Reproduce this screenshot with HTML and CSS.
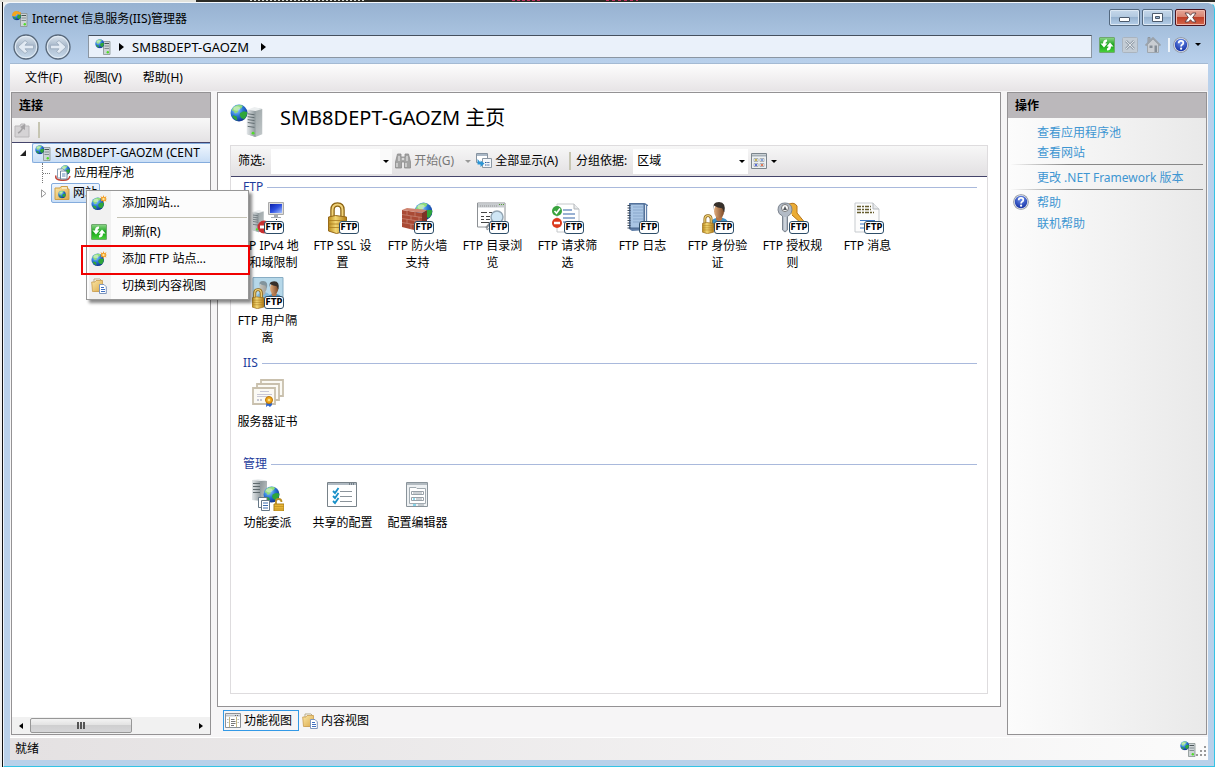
FILE: index.html
```html
<!DOCTYPE html>
<html lang="zh-CN">
<head>
<meta charset="utf-8">
<title>Internet 信息服务(IIS)管理器</title>
<link rel="stylesheet" href="styles.css">
</head>
<body>
<svg class="defs" aria-hidden="true">
  <defs>
    <radialGradient id="g-globe" cx=".35" cy=".3" r=".75"><stop offset="0" stop-color="#9fd8ff"/><stop offset=".5" stop-color="#2a78d8"/><stop offset="1" stop-color="#0d2f8c"/></radialGradient>
    <linearGradient id="g-metal" x1="0" x2="1" y1="0" y2="0"><stop offset="0" stop-color="#e4e8ea"/><stop offset="1" stop-color="#8d979b"/></linearGradient>
    <linearGradient id="g-side" x1="0" x2="1" y1="0" y2="1"><stop offset="0" stop-color="#8d9799"/><stop offset="1" stop-color="#c3c9cb"/></linearGradient>
    <linearGradient id="g-gold" x1="0" x2="1" y1="0" y2="0"><stop offset="0" stop-color="#b98a1c"/><stop offset=".4" stop-color="#f3d774"/><stop offset="1" stop-color="#b07a12"/></linearGradient>
    <linearGradient id="g-green" x1="0" x2="0" y1="0" y2="1"><stop offset="0" stop-color="#8fd68a"/><stop offset=".5" stop-color="#17a41b"/><stop offset="1" stop-color="#4bd23c"/></linearGradient>
    <linearGradient id="g-folder" x1="0" x2="1" y1="0" y2="1"><stop offset="0" stop-color="#fbe7a6"/><stop offset="1" stop-color="#dba94a"/></linearGradient>
    <linearGradient id="g-screen" x1="0" x2="1" y1="0" y2="1"><stop offset="0" stop-color="#0a1fa8"/><stop offset=".5" stop-color="#2d4fe0"/><stop offset="1" stop-color="#a8c4ff"/></linearGradient>
    <linearGradient id="g-round" x1="0" x2="0" y1="0" y2="1"><stop offset="0" stop-color="#dfe8f1"/><stop offset=".45" stop-color="#a9b9cb"/><stop offset="1" stop-color="#c9dcee"/></linearGradient>
    <radialGradient id="g-help" cx=".5" cy=".25" r=".8"><stop offset="0" stop-color="#6f92ee"/><stop offset="1" stop-color="#0e2aa0"/></radialGradient>
    <linearGradient id="g-man" x1="0" x2="1" y1="0" y2="0"><stop offset="0" stop-color="#e0ac7c"/><stop offset="1" stop-color="#7d4a28"/></linearGradient>
  </defs>

  <symbol id="globe" viewBox="0 0 16 16">
    <circle cx="8" cy="8" r="7.5" fill="url(#g-globe)"/>
    <path d="M6 1.2Q9 .2 11.5 1.6L10 4 7.500 4.500 7 7 4.500 8.500 3 6 1.500 6Q2.500 2.500 6 1.200Z" fill="#8fdc7c"/>
    <path d="M9 8L12 6.500 15.300 7Q15.300 11 12.500 13.500L10 12.500 8.500 10ZM3 10L6 11 6.500 14.800Q3.500 13.500 2 11Z" fill="#2fa63a"/>
    <ellipse cx="6" cy="4" rx="3" ry="2" fill="#fff" opacity=".4"/>
  </symbol>
  <symbol id="server" viewBox="0 0 16 32">
    <path d="M1 4L10 1 16 2V28L9 31 1 28Z" fill="url(#g-side)"/>
    <path d="M0 3L9 4V31L0 28Z" fill="url(#g-metal)"/>
    <path d="M1 7L8 8M1 10L8 11M1 13L8 14M1 16L8 17M1 20L8 21" stroke="#5f6a6e" stroke-width="1"/>
    <path d="M0 3L8 0 16 2 9 4Z" fill="#eceff0"/>
    <circle cx="6.500" cy="27" r="1.500" fill="#4fdc28"/>
  </symbol>
  <symbol id="server-globe" viewBox="0 0 34 34">
    <use href="#server" x="16" y="3" width="17" height="31"/>
    <use href="#globe" x="0" y="0" width="18" height="18"/>
  </symbol>
  <symbol id="server-globe-s" viewBox="0 0 16 16">
    <path d="M8.500 2.500H15V15.500H8.500Z" fill="#cdd4d7" stroke="#87928f" stroke-width=".8"/>
    <path d="M9.500 4.500H14" stroke="#4b5558"/><path d="M9.500 7H14M9.500 9.500H14" stroke="#828d91"/>
    <circle cx="12.800" cy="13.300" r="1.200" fill="#4fdc28"/>
    <use href="#globe" x="0" y="0" width="9.500" height="9.500"/>
  </symbol>
  <symbol id="app" viewBox="0 0 16 16">
    <use href="#server-globe-s" width="16" height="16"/>
    <path d="M0 5Q0 0 5 0L9 1.500 8.500 4 5 3 3 5.500Z" fill="#f3a51e"/>
  </symbol>
  <symbol id="star-globe" viewBox="0 0 16 16">
    <use href="#globe" x="0" y="2" width="13.500" height="13.500"/>
    <path d="M12.500 0L13.300 2.200 15.500 1.200 14.600 3.300 16 4 14.600 4.700 15.500 6.500 13.300 5.700 12.500 8 11.700 5.700 9.500 6.500 10.400 4.700 9 4 10.400 3.300 9.500 1.200 11.700 2.200Z" fill="#f39b1f"/>
    <circle cx="12.500" cy="4" r="1.200" fill="#ffe79a"/>
  </symbol>
  <symbol id="refresh" viewBox="0 0 16 16">
    <rect x=".5" y=".5" width="15" height="15" rx=".5" fill="url(#g-green)" stroke="#6fa76f"/>
    <path d="M8 2.500Q4 2.500 4 6.500H1.500L5 10.500 8.500 6.500H6.500Q6.500 4.800 8 4.500Z" fill="#fff"/>
    <path d="M8 13.500Q12 13.500 12 9.500H14.500L11 5.500 7.500 9.500H9.500Q9.500 11.200 8 11.500Z" fill="#fff"/>
  </symbol>
  <symbol id="stop" viewBox="0 0 16 16">
    <rect x=".5" y=".5" width="15" height="15" rx="1" fill="#c3ccd5" stroke="#aab4bf"/>
    <path d="M4 4L12 12M12 4L4 12" stroke="#98a3ae" stroke-width="2.600"/><path d="M4 4L12 12M12 4L4 12" stroke="#dfe4e9"/>
  </symbol>
  <symbol id="home" viewBox="0 0 16 16">
    <path d="M2.500 7V15.500H13.500V7L8 2Z" fill="#c9cdd2" stroke="#9fa7af"/>
    <path d="M3 .5H5V3.500L3 5.500Z" fill="#a9b1b9" stroke="#8f979f"/>
    <path d="M.5 8.500L8 1 15.500 8.500" fill="none" stroke="#9ba3ab" stroke-width="1.800"/>
    <path d="M4.500 8.500H7.500V11H4.500ZM9.500 8.500H12V15H9.500Z" fill="#858e97"/>
  </symbol>
  <symbol id="help" viewBox="0 0 16 16">
    <circle cx="8" cy="8" r="7.800" fill="#8d929c"/><circle cx="8" cy="8" r="7" fill="#e0e5ee"/><circle cx="8" cy="8" r="6.200" fill="url(#g-help)"/>
    <path d="M5.700 6.200Q5.700 3.900 8 3.900 10.300 3.900 10.300 5.900 10.300 7 9 7.700 8.100 8.200 8.100 9.500" fill="none" stroke="#fff" stroke-width="1.700"/><circle cx="8.100" cy="11.700" r="1.100" fill="#fff"/>
  </symbol>
  <symbol id="back" viewBox="0 0 26 26">
    <circle cx="13" cy="13" r="12" fill="url(#g-round)" stroke="#58687a" stroke-width="1.300"/>
    <circle cx="13" cy="13" r="10.700" fill="none" stroke="#e4edf5" stroke-width="1"/>
    <path d="M5 13L12 6.500 14.500 8.500 12 11.200H20.500V14.800H12L14.500 17.500 12 19.500Z" fill="#e2eaf3" stroke="#98a8ba" stroke-width=".8"/>
  </symbol>
  <symbol id="folder-up" viewBox="0 0 16 16">
    <path d="M1 4H6L7 2H11V4H15V15H1Z" fill="#d5d3d5" stroke="#b9b7b9"/>
    <path d="M4 11Q7 10 9 5" stroke="#a4a2a4" stroke-width="1.600" fill="none"/><path d="M6 5L11 2V8Z" fill="#a4a2a4"/>
  </symbol>
  <symbol id="folder-globe" viewBox="0 0 16 16">
    <path d="M1 3H6L7 1.500H13.500V4H15V14.500H1Z" fill="url(#g-folder)" stroke="#cf9f48"/>
    <path d="M8 3H13" stroke="#fff"/>
    <use href="#globe" x="4" y="5.500" width="8" height="8"/>
  </symbol>
  <symbol id="folder-doc" viewBox="0 0 16 16">
    <path d="M3 1H9L10.500 2.500V13H3Z" fill="#fff" stroke="#b7aa88"/>
    <path d="M.7 4H4L5 2.500H11.500V13.500H1.500Z" fill="url(#g-folder)" stroke="#c99c4c" stroke-width=".8"/>
    <path d="M8.500 6.500H13L15.300 8.800V15.500H8.500Z" fill="#fff" stroke="#7f97bd"/>
    <path d="M10 9.500H13M10 11.500H14M10 13.500H14" stroke="#3f6fc0"/>
  </symbol>
  <symbol id="pool" viewBox="0 0 16 16">
    <use href="#globe" x="5" y="0" width="10.500" height="10.500"/>
    <path d="M1 10.500Q-.5 15 7 15.300 15 15.300 14.800 11" fill="none" stroke="#c1453a" stroke-width="1.500"/>
    <path d="M2.500 4H8L10 6V13H2.500Z" fill="#fff" stroke="#8ba0b5"/><path d="M5.500 6H10.500L12 7.500V14H5.500Z" fill="#fff" stroke="#6f879f"/>
    <path d="M7 9H10.500M7 11H10.500" stroke="#5c88ba"/>
  </symbol>
  <symbol id="binoculars" viewBox="0 0 16 16">
    <path d="M2.500 1H6V4H10V1H13.500L15.500 9V15H9.500V9H6.500V15H.5V9Z" fill="#a3a3a3" stroke="#8b8b8b" stroke-width=".8"/>
    <path d="M2 10V14M4 3V8M11 10V14M12 3V8" stroke="#dadada" stroke-width="1.400"/><circle cx="8" cy="6" r="1.300" fill="#d8d8d8"/>
  </symbol>
  <symbol id="show-all" viewBox="0 0 16 16">
    <path d="M.5 .5H11.500V9.500H.5Z" fill="#fff" stroke="#8693a0"/><path d="M1 2H11" stroke="#aab8c6" stroke-width="2"/>
    <path d="M6.500 5.500H15.500V14.500H6.500Z" fill="#f4f7fa" stroke="#8c98a4"/><path d="M9 9.500H14M9 12H14" stroke="#315a98" stroke-width="1.200" stroke-dasharray="1.500 .8"/>
    <path d="M1.500 6V11.500H4.500V14L8.500 10.500 4.500 7.500V9.500Z" fill="#2c95d5"/>
  </symbol>
  <symbol id="view-grid" viewBox="0 0 16 16">
    <path d="M.5 .5H15.500V15.500H.5Z" fill="#eef1f3" stroke="#7c868d"/><path d="M1 2.500H15" stroke="#a7b0b7" stroke-width="2"/>
    <g fill="#fff" stroke="#9aa3aa" stroke-width=".8"><path d="M3 5.500H7V8.500H3ZM9 5.500H13V8.500H9ZM3 10.500H7V13.500H3ZM9 10.500H13V13.500H9Z"/></g>
    <circle cx="5" cy="7" r="1.100" fill="#b8a328"/><circle cx="11" cy="7" r="1.100" fill="#688bd0"/><circle cx="5" cy="12" r="1.100" fill="#354bd0"/><circle cx="11" cy="12" r="1.100" fill="#dc5a33"/>
  </symbol>
  <symbol id="features" viewBox="0 0 16 16">
    <path d="M.5 .5H15.500V14.500H.5Z" fill="#fff" stroke="#8b9197"/><path d="M1 2.500H15" stroke="#c0c5ca" stroke-width="2"/>
    <path d="M10 2.500H14" stroke="#666" stroke-dasharray="1 1"/><path d="M4.500 4V14M11.500 4V14" stroke="#c7b680"/>
    <path d="M2 6.500H3.500M2 9.500H3.500M12.500 6.500H14M12.500 9.500H14" stroke="#b3bac1"/><path d="M6 6.500H9.500M6 8.500H10.500M6 10.500H10.500M6 12.500H9" stroke="#777"/>
  </symbol>
  <symbol id="lock" viewBox="0 0 20 32">
    <path d="M5 16V8Q5 2.500 10 2.500 15 2.500 15 8V16" fill="none" stroke="#8b6312" stroke-width="4.500"/><path d="M5 16V8Q5 2.500 10 2.500 15 2.500 15 8V16" fill="none" stroke="#f0d27a" stroke-width="2"/>
    <path d="M1 15L8 13.500 19 15V29L9 31.500 1 29Z" fill="url(#g-gold)" stroke="#96691a"/>
    <path d="M1 18.500H19M1 22H19M1 25.500H19" stroke="#ab7c20" stroke-width=".8"/>
  </symbol>
  <symbol id="man" viewBox="0 0 24 32">
    <path d="M1 30Q0 20 9 18H15Q24 20 23 30Z" fill="#3e92c9"/><path d="M8 16H15V20L11.500 23 8 20Z" fill="#b87849"/>
    <ellipse cx="11.500" cy="10.500" rx="5.700" ry="8" fill="url(#g-man)"/>
    <path d="M5.500 9Q3 0 11.500 0 20 0 17.500 12L15 7Q10 7 5.500 4Z" fill="#36302b"/>
  </symbol>

  <symbol id="i-ip" viewBox="0 0 32 32">
    <use href="#server" x="0" y="8" width="12" height="23"/>
    <path d="M16.500 .5H31.500V12.500H16.500Z" fill="#dcdcdc" stroke="#aaa"/><path d="M18 2H30V11H18Z" fill="url(#g-screen)"/><path d="M22 13H26V15H29V16H19V15H22Z" fill="#a6abb0"/><path d="M24.500 17V20" stroke="#222" stroke-dasharray="1 1"/>
    <circle cx="12" cy="25" r="6.500" fill="#c83030"/><path d="M8 25H16" stroke="#fff" stroke-width="3"/>
  </symbol>
  <symbol id="i-ssl" viewBox="0 0 32 32"><use href="#lock" x="0" y="0" width="21" height="32"/></symbol>
  <symbol id="i-firewall" viewBox="0 0 32 32">
    <use href="#globe" x="12" y="0" width="19" height="19"/>
    <path d="M0 8L20 11V30L0 25Z" fill="#a94a35"/><path d="M20 11L25 8V26L20 30Z" fill="#7e3225"/><path d="M0 8L5 6 25 8 20 11Z" fill="#cf8470"/>
    <path d="M0 12.500L20 15.500M0 16.500L20 19.500M0 20.500L20 24M5 9V13M13 10V14.500M9 14V18M17 15V19M5 17V21M13 18.500V23M9 22V27M17 23V29" stroke="#c98a78" stroke-width=".7"/>
  </symbol>
  <symbol id="i-browse" viewBox="0 0 32 32">
    <path d="M.5 1H28V25H14L10 28V25H.5Z" fill="#fff" stroke="#8c9094"/><path d="M1 3.500H27.500" stroke="#c7cbce" stroke-width="4"/><path d="M3 4H21" stroke="#999" stroke-dasharray="1 1"/><path d="M22 2.500H27" stroke="#58a03a" stroke-dasharray="1 1"/>
    <path d="M4 10.500H10M12 10.500H15M4 14.500H7M9 14.500H13M4 17.500H7M9 17.500H13M4 20.500H12" stroke="#444"/>
    <circle cx="20" cy="15" r="6" fill="#cfe6f5" stroke="#93a5b3" stroke-width="1.500"/><path d="M15 19L9 26" stroke="#8b8f93" stroke-width="2"/>
  </symbol>
  <symbol id="i-filter" viewBox="0 0 32 32">
    <path d="M5 2H22L27 7V30H5Z" fill="#fff" stroke="#c5c8cb"/><path d="M22 2V7H27" fill="#e8eaec" stroke="#b4b8bb"/>
    <path d="M11 8H20M11 12H23M11 16H23M11 20H20" stroke="#3465a8" stroke-width="1.200"/>
    <circle cx="5" cy="9" r="5" fill="#39a33e"/><path d="M2.500 9L4.500 11.200 8 6.500" fill="none" stroke="#fff" stroke-width="1.700"/>
    <circle cx="5" cy="21" r="5" fill="#db3a1d"/><path d="M2 21H8" stroke="#fff" stroke-width="2.500"/>
  </symbol>
  <symbol id="i-log" viewBox="0 0 32 32">
    <path d="M2 1H18L21 3V28L5 29 2 27Z" fill="#617fa8"/><path d="M3 2H17V26H3Z" fill="#a9c5e4" stroke="#48678e"/><path d="M18.500 3V27M20.500 4V27" stroke="#e4ebf4"/>
    <path d="M6 5H16M6 8H16M6 11H16M6 14H16M6 17H16M6 20H16" stroke="#7d9cc2" stroke-width=".7"/><path d="M2 3V27" stroke="#3c4958" stroke-width="3" stroke-dasharray="1 1.500"/>
  </symbol>
  <symbol id="i-auth" viewBox="0 0 32 32"><use href="#man" x="7" y="0" width="21" height="28"/><use href="#lock" x="-1" y="12" width="14" height="20"/></symbol>
  <symbol id="i-rules" viewBox="0 0 32 32">
    <path d="M10 3Q17 -1 20 4L20 11 29 22 25 22 15 13" fill="#eaac36" stroke="#b87517"/>
    <path d="M1 8Q1 1 8 1 15 1 15 8 15 12 10.500 14.500V28L8 30 5.500 28V14Q1 12 1 8Z" fill="#b3bbc6" stroke="#7d8590"/><circle cx="8" cy="6" r="3.500" fill="#fff" stroke="#777"/><path d="M6 8L8 4 10 8Z" fill="#55595e"/><path d="M8 15V28" stroke="#e7eaee"/>
  </symbol>
  <symbol id="i-message" viewBox="0 0 32 32">
    <path d="M3 1H21L27 7V30H3Z" fill="#fcfcfc" stroke="#c7cbcf"/><path d="M21 1V7H27" fill="#e7e9eb" stroke="#b4b8bb"/>
    <path d="M5 4.500H19M5 7.500H19M5 10.500H22" stroke="#655c2e" stroke-width="1.300" stroke-dasharray="4 1 2 1"/><path d="M8 18.500H23M8 22H14M8 26H12" stroke="#3d78c4"/>
  </symbol>
  <symbol id="i-isolate" viewBox="0 0 32 32">
    <path d="M1 .5H31V24H1Z" fill="#b6d8e9" stroke="#88adc4"/><use href="#man" x="4" y="3" width="15" height="22" opacity=".4"/><use href="#man" x="14" y="4" width="17" height="23"/>
    <use href="#lock" x="-1" y="11" width="14" height="21"/>
  </symbol>
  <symbol id="i-cert" viewBox="0 0 32 32">
    <g fill="#fbfaf5" stroke="#c9c0ad" stroke-width="1.800"><path d="M9 2H31V18H9Z"/><path d="M5 6H27V22H5Z"/><path d="M1 10H23V26H1Z"/></g>
    <path d="M8 13.500H17M5 16.500H20M5 18.500H17" stroke="#c9c7d6"/><path d="M5 22H11" stroke="#8c90b0" stroke-dasharray="2 1"/>
    <path d="M14.500 23L14 29 16 27.500 18 29 20 27 19.500 23Z" fill="#2e63c8"/><circle cx="17" cy="22" r="3.500" fill="#f0a71b" stroke="#b97508"/><circle cx="17" cy="22" r="1.300" fill="#fce18d"/>
  </symbol>
  <symbol id="i-delegate" viewBox="0 0 32 32">
    <path d="M0 1H9V22L0 21Z" fill="url(#g-metal)"/><path d="M9 1L15 2V22L9 22Z" fill="url(#g-side)"/><path d="M1 4.500H8M1 7.500H8M1 10.500H8M1 13.500H8" stroke="#5f6a6e"/><path d="M0 1L6 0 15 1.500 9 2Z" fill="#eceff0"/>
    <use href="#globe" x="11" y="7" width="17" height="17"/>
    <path d="M6.500 18.500H15V28.500H6.500Z" fill="#fff" stroke="#667786"/><path d="M9.500 21.500H17.500V31.500H9.500Z" fill="#fff" stroke="#667786"/><path d="M11 24H16M11 26.500H16M11 29H16" stroke="#3d6cae"/>
    <path d="M24 25V22Q24 20 26.500 20 29.500 20 29.500 23" fill="none" stroke="#b98d22" stroke-width="1.800"/><path d="M22 25H32V32H22Z" fill="#e7b537" stroke="#a97f19"/><path d="M22 27.500H32M22 30H32" stroke="#b98d22" stroke-width=".7"/>
  </symbol>
  <symbol id="i-shared" viewBox="0 0 32 32">
    <path d="M.5 3.500H29.500V27.500H.5Z" fill="#fff" stroke="#788289"/><path d="M1 5H29" stroke="#b0bac2" stroke-width="2"/><path d="M22 5H28" stroke="#37434d" stroke-dasharray="1 1"/>
    <path d="M13 12.500H25M13 17.500H25M13 22.500H25" stroke="#8b949b"/><path d="M6 12L8 14 11.500 9M6 17L8 19 11.500 14M6 22L8 24 11.500 19" fill="none" stroke="#1790c8" stroke-width="1.800"/>
  </symbol>
  <symbol id="i-editor" viewBox="0 0 32 32">
    <path d="M4.500 3.500H25.500V27.500H4.500Z" fill="#eef1f3" stroke="#8a949b"/><path d="M5 5H25" stroke="#b3bbc1" stroke-width="2"/>
    <path d="M7.500 8.500H14L15 9.500H23.500V24.500H7.500Z" fill="#fff" stroke="#a2abb1"/><path d="M9.500 12.500H21.500V15.500H9.500ZM9.500 18.500H21.500V21.500H9.500Z" fill="#fff" stroke="#98a1a8"/><path d="M11 14H20M14 20H20" stroke="#98a1a8"/><path d="M11 20H13M11 26H14" stroke="#1eb2d8"/><path d="M16 26H22" stroke="#98a1a8"/>
  </symbol>
</svg>

<div class="window">
  <header class="titlebar">
    <svg class="ico"><use href="#app"/></svg>
    <h1 class="title">Internet 信息服务(IIS)管理器</h1>
    <div class="caption">
      <button class="cap" aria-label="最小化"><svg viewBox="0 0 29 15"><rect x="9.500" y="7.500" width="10" height="4" rx=".5" fill="#fff" stroke="#4c5a6c"/></svg></button>
      <button class="cap" aria-label="最大化"><svg viewBox="0 0 29 15"><path d="M9.500 3.500H19.500V11.500H9.500ZM12.500 6.500V8.500H16.500V6.500Z" fill="#fff" fill-rule="evenodd" stroke="#4c5a6c"/></svg></button>
      <button class="cap cap-close" aria-label="关闭"><svg viewBox="0 0 29 15"><path d="M9 3H12.500L14.500 5.300 16.500 3H20L16.700 7.500 20 12H16.500L14.500 9.700 12.500 12H9L12.300 7.500Z" fill="#fff" stroke="#5b3c40" stroke-width=".9"/></svg></button>
    </div>
  </header>

  <nav class="navbar" aria-label="地址">
    <div class="history">
      <button class="round" aria-label="后退"><svg><use href="#back"/></svg></button>
      <button class="round round-fwd" aria-label="前进"><svg><use href="#back"/></svg></button>
    </div>
    <div class="address">
      <svg class="ico"><use href="#server-globe-s"/></svg>
      <i class="tri"></i>
      <a class="crumb" href="#">SMB8DEPT-GAOZM</a>
      <i class="tri"></i>
    </div>
    <div class="navtools">
      <button class="plain" aria-label="刷新"><svg class="ico"><use href="#refresh"/></svg></button>
      <button class="plain" aria-label="停止"><svg class="ico"><use href="#stop"/></svg></button>
      <button class="plain" aria-label="主页"><svg class="ico"><use href="#home"/></svg></button>
      <span class="navsep"></span>
      <button class="plain helpbtn" aria-label="帮助"><svg class="ico"><use href="#help"/></svg><i class="down"></i></button>
    </div>
  </nav>

  <div class="client">
    <div class="menubar">
      <button class="plain">文件(F)</button><button class="plain">视图(V)</button><button class="plain">帮助(H)</button>
    </div>

    <div class="columns">
      <aside class="panel">
        <h2 class="panel-head">连接</h2>
        <div class="strip"><button class="plain" aria-label="上一级"><svg class="ico"><use href="#folder-up"/></svg></button><span class="vsep"></span></div>
        <ul class="tree">
          <li class="node"><i class="open"></i><a class="leaf picked wide" href="#"><svg class="ico"><use href="#server-globe-s"/></svg>SMB8DEPT-GAOZM (CENT</a></li>
          <li class="node child"><i class="dots"></i><a class="leaf" href="#"><svg class="ico"><use href="#pool"/></svg>应用程序池</a></li>
          <li class="node child"><svg class="shut" viewBox="0 0 6 9"><path d="M.5 .8L5 4.500 .5 8.200Z" fill="#fff" stroke="#999"/></svg><a class="leaf picked" href="#"><svg class="ico"><use href="#folder-globe"/></svg>网站</a></li>
        </ul>
        <div class="hscroll">
          <button class="plain arrow" aria-label="向左滚动"><i class="tri tri-left"></i></button>
          <div class="track"><div class="thumb"><i class="grip"></i></div></div>
          <button class="plain arrow" aria-label="向右滚动"><i class="tri"></i></button>
        </div>
      </aside>

      <div class="center">
        <main class="panel main">
          <div class="page-head"><svg class="big"><use href="#server-globe"/></svg><h2 class="page-title">SMB8DEPT-GAOZM 主页</h2></div>
          <div class="board">
            <div class="toolbar">
              <label for="filter">筛选:</label>
              <span class="combo"><input id="filter" type="text"><button class="plain drop" aria-label="筛选历史"><i class="down"></i></button></span>
              <button class="plain tool off"><svg class="ico"><use href="#binoculars"/></svg>开始(G)<i class="down"></i></button>
              <button class="plain tool"><svg class="ico"><use href="#show-all"/></svg>全部显示(A)</button>
              <span class="vsep"></span>
              <label for="groupby">分组依据:</label>
              <span class="pick"><select id="groupby"><option>区域</option></select><i class="down"></i></span>
              <button class="plain tool" aria-label="视图"><svg class="ico"><use href="#view-grid"/></svg><i class="down"></i></button>
            </div>
            <section class="group">
              <h3 class="group-head">FTP</h3>
              <div class="items">
                <button class="item"><svg><use href="#i-ip"/></svg><b class="badge">FTP</b>FTP IPv4 地<br>址和域限制</button>
                <button class="item"><svg><use href="#i-ssl"/></svg><b class="badge">FTP</b>FTP SSL 设<br>置</button>
                <button class="item"><svg><use href="#i-firewall"/></svg><b class="badge">FTP</b>FTP 防火墙<br>支持</button>
                <button class="item"><svg><use href="#i-browse"/></svg><b class="badge">FTP</b>FTP 目录浏<br>览</button>
                <button class="item"><svg><use href="#i-filter"/></svg><b class="badge">FTP</b>FTP 请求筛<br>选</button>
                <button class="item"><svg><use href="#i-log"/></svg><b class="badge">FTP</b>FTP 日志</button>
                <button class="item"><svg><use href="#i-auth"/></svg><b class="badge">FTP</b>FTP 身份验<br>证</button>
                <button class="item"><svg><use href="#i-rules"/></svg><b class="badge">FTP</b>FTP 授权规<br>则</button>
                <button class="item"><svg><use href="#i-message"/></svg><b class="badge">FTP</b>FTP 消息</button>
                <button class="item"><svg><use href="#i-isolate"/></svg><b class="badge">FTP</b>FTP 用户隔<br>离</button>
              </div>
            </section>
            <section class="group">
              <h3 class="group-head">IIS</h3>
              <div class="items"><button class="item"><svg><use href="#i-cert"/></svg>服务器证书</button></div>
            </section>
            <section class="group">
              <h3 class="group-head">管理</h3>
              <div class="items">
                <button class="item"><svg><use href="#i-delegate"/></svg>功能委派</button>
                <button class="item"><svg><use href="#i-shared"/></svg>共享的配置</button>
                <button class="item"><svg><use href="#i-editor"/></svg>配置编辑器</button>
              </div>
            </section>
          </div>
        </main>
        <div class="views">
          <button class="view view-on"><svg class="ico"><use href="#features"/></svg>功能视图</button>
          <button class="view"><svg class="ico"><use href="#folder-doc"/></svg>内容视图</button>
        </div>
      </div>

      <aside class="panel actions">
        <h2 class="panel-head">操作</h2>
        <ul class="links">
          <li><a href="#">查看应用程序池</a></li>
          <li><a href="#">查看网站</a></li>
          <li class="ruled"><a href="#">更改 .NET Framework 版本</a></li>
          <li class="ruled helped"><svg class="ico"><use href="#help"/></svg><a href="#">帮助</a></li>
          <li><a href="#">联机帮助</a></li>
        </ul>
      </aside>
    </div>

    <footer class="status"><span>就绪</span><span class="status-end"><svg class="ico"><use href="#server-globe-s"/></svg><svg class="sizer" viewBox="0 0 11 11"><path d="M8 0H10V2H8ZM8 4H10V6H8ZM8 8H10V10H8ZM4 4H6V6H4ZM4 8H6V10H4ZM0 8H2V10H0Z" fill="#999"/></svg></span></footer>
  </div>

  <div class="context" role="menu">
    <button class="entry" role="menuitem"><svg class="ico"><use href="#star-globe"/></svg>添加网站...</button>
    <button class="entry entry-ruled" role="menuitem"><svg class="ico"><use href="#refresh"/></svg>刷新(R)</button>
    <button class="entry entry-marked" role="menuitem"><svg class="ico"><use href="#star-globe"/></svg>添加 FTP 站点...</button>
    <button class="entry" role="menuitem"><svg class="ico"><use href="#folder-doc"/></svg>切换到内容视图</button>
  </div>
</div>
</body>
</html>
```

FILE: styles.css
```css
* { box-sizing: border-box; }

body {
  margin: 0;
  height: 100vh;
  padding: 2px 0 0 3px;
  overflow: hidden;
  background:
    repeating-linear-gradient(to right, #d8d8d0 0 2px, #2b2b26 2px 4px) 250px 0 / 114px 1px no-repeat,
    repeating-linear-gradient(to right, #c03060 0 3px, #2b2b26 3px 5px) 512px 0 / 30px 1px no-repeat,
    repeating-linear-gradient(to right, #c03060 0 3px, #2b2b26 3px 6px) 606px 0 / 32px 1px no-repeat,
    linear-gradient(to right, #e2e2dc 196px, #2b2b26 196px) 0 0 / 100% 2px no-repeat,
    linear-gradient(#111, #111) 2px 0 / 1px 100% no-repeat,
    #f2f2f0;
  font: 12px/18px "Noto Sans", "Noto Sans CJK SC", sans-serif;
  color: #000;
}

button, input, select { font: inherit; color: inherit; }
button { padding: 0; cursor: default; }
a { color: inherit; text-decoration: none; }
h1, h2, h3, ul { margin: 0; padding: 0; font-size: inherit; font-weight: 400; list-style: none; }
svg { display: block; flex: none; }

.defs { position: absolute; width: 0; height: 0; }
.ico { width: 16px; height: 16px; }
.plain { display: flex; align-items: center; border: 0; background: none; }

.tri { flex: none; border: 4px solid transparent; border-left: 5px solid #000; border-right: 0; }
.tri-left { border-left: 0; border-right: 5px solid #000; }
.down { flex: none; border: 3px solid transparent; border-top: 3px solid #000; border-bottom: 0; }

.window {
  position: relative;
  display: flex;
  flex-direction: column;
  height: 100%;
  border: 1px solid #35c3e4;
  border-top-color: #f4f8fc;
  border-left-color: #eef5fc;
  border-radius: 7px 7px 0 0;
  padding: 0 6px 6px;
  background: linear-gradient(#97b2d1, #b9d1ec 60px, #b9d1ea);
}

/* Title bar */
.titlebar { display: flex; align-items: center; height: 29px; padding: 2px 0 0 2px; }
.title { margin-left: 4px; }
.caption { display: flex; gap: 2px; margin-left: auto; padding: 0 2px 2px 0; }
.cap {
  width: 31px;
  height: 17px;
  border: 1px solid #53687f;
  border-radius: 2px;
  background: linear-gradient(#c6d8ea, #b2c9e0 45%, #97b3d0 50%, #b6cfe9);
  box-shadow: inset 0 0 0 1px #dce8f4;
}
.cap svg { width: 29px; height: 15px; }
.cap-close {
  border-color: #4a1420;
  background: linear-gradient(#e6a698, #d88573 45%, #bf3f28 50%, #d3674d);
  box-shadow: inset 0 0 0 1px #efb9ad;
}

/* Address row */
.navbar { display: flex; align-items: center; height: 31px; padding: 0 0 2px 3px; }
.history { display: flex; gap: 6px; }
.round { width: 26px; height: 26px; border: 0; background: none; }
.round svg { width: 26px; height: 26px; }
.round-fwd { transform: scaleX(-1); }
.address {
  display: flex;
  flex: 1;
  align-items: center;
  gap: 8px;
  height: 23px;
  margin-left: 17px;
  padding-left: 6px;
  border: 1px solid #8b96a2;
  border-top-color: #45505e;
  background: #eaf1fa;
}
.crumb { font-size: 13px; line-height: 16px; }
.address .crumb + .tri { margin-left: 4px; }
.navtools { display: flex; align-items: center; gap: 7px; padding: 0 7px 4px 7px; }
.navsep { width: 2px; height: 14px; background: #edf3f9; }
.helpbtn { gap: 6px; margin-left: -4px; }

/* Client area */
.client { display: flex; flex: 1; flex-direction: column; min-height: 0; background: #f6f5f6; }
.menubar {
  display: flex;
  gap: 21px;
  height: 28px;
  padding-left: 15px;
  border-top: 1px solid #a4bad3;
  background: linear-gradient(#fdfdfd, #e7e4e6);
}
.columns {
  display: grid;
  flex: 1;
  grid-template-columns: 200px minmax(0, 1fr) 200px;
  gap: 6px;
  min-height: 0;
  padding: 1px 1px 2px;
}
.panel { display: flex; flex-direction: column; min-width: 0; overflow: hidden; border: 1px solid #949294; background: #fff; }
.panel-head { height: 25px; padding-left: 7px; background: #bbb8bb; font-weight: 700; line-height: 25px; }
.strip { display: flex; align-items: center; gap: 8px; height: 25px; padding-left: 2px; border-bottom: 1px solid #44446a; background: linear-gradient(#f8f8f8, #e4e2e4); }
.vsep { width: 2px; height: 16px; background: #c6c5b2; }

/* Connections tree */
.tree { flex: 1; }
.node { display: flex; align-items: center; height: 20px; padding-left: 8px; white-space: nowrap; }
.child { padding-left: 28px; }
.leaf { display: flex; align-items: center; gap: 4px; height: 20px; padding: 0 2px; border: 1px solid transparent; border-radius: 2px; }
.picked { border-color: #84acdd; background: linear-gradient(#eff6fe, #c9def6); }
.wide { flex: 1; border-right: 0; border-radius: 2px 0 0 2px; }
.child .leaf { gap: 3px; }
.open { margin-right: 6px; border-left: 6px solid transparent; border-bottom: 6px solid #222; }
.dots { width: 8px; height: 20px; margin: 0 2px; border-left: 1px dotted #777; background: repeating-linear-gradient(to right, #777 0 1px, transparent 1px 2px) 0 10px / 8px 1px no-repeat; }
.shut { width: 6px; height: 9px; margin: 0 4px 0 1px; }

.hscroll { display: flex; height: 17px; background: #f1f1f1; }
.arrow { justify-content: center; width: 18px; }
.arrow .tri { border-width: 3px 0 3px 4px; }
.arrow .tri-left { border-width: 3px 4px 3px 0; }
.track { flex: 1; }
.thumb { display: grid; place-items: center; width: 63%; height: 15px; margin-top: 1px; border: 1px solid #979797; border-radius: 2px; background: linear-gradient(#f3f3f3, #e3e3e3 45%, #cfcfd0 50%, #d6d6d8); }
.grip { width: 8px; height: 7px; background: repeating-linear-gradient(to right, #555 0 2px, transparent 2px 3px); }

/* Feature view */
.center { display: flex; flex-direction: column; min-width: 0; }
.main { flex: 1; padding: 11px 12px 12px; }
.page-head { display: flex; align-items: center; gap: 16px; height: 34px; margin-bottom: 7px; }
.big { width: 34px; height: 34px; }
.page-title { padding-bottom: 6px; font-size: 20px; line-height: 28px; }
.board { flex: 1; border: 1px solid #dedcde; }
.toolbar { display: flex; align-items: center; height: 31px; padding-left: 7px; border-bottom: 1px solid #44446a; background: linear-gradient(#f7f7f7, #e2e0e2); white-space: nowrap; }
.combo { display: flex; width: 121px; height: 25px; margin: 0 3px 0 6px; background: #fff; }
.combo input { flex: 1; min-width: 0; border: 0; padding: 0 4px; background: none; }
.drop { width: 12px; justify-content: center; background: #fafafa; }
.tool { gap: 3px; }
.tool .down { margin-left: 1px; }
.off { margin-right: 5px; color: #777; }
.off .down { margin-left: 8px; border-top-color: #999; }
.toolbar .vsep { height: 18px; margin: 0 5px 0 11px; }
.pick { display: flex; align-items: center; width: 115px; height: 25px; margin: 0 3px 0 6px; padding-right: 3px; background: #fff; }
.pick select { flex: 1; height: 100%; padding: 0 4px; border: 0; background: none; appearance: none; }

.group { padding: 1px 10px 3px 0; }
.group-head { display: flex; align-items: center; gap: 4px; height: 18px; margin-bottom: 4px; padding-left: 12px; color: #1e3c9c; }
.group-head::after { flex: 1; height: 1px; background: #a9b9dc; content: ""; }
.items { display: grid; grid-template-columns: repeat(auto-fill, 75px); grid-auto-rows: 75px; margin-left: -1px; }
.item { position: relative; display: flex; flex-direction: column; align-items: center; justify-content: flex-start; padding-top: 2px; border: 0; background: none; line-height: 17px; white-space: nowrap; }
.item svg { width: 32px; height: 32px; margin-bottom: 3px; }
.badge {
  position: absolute;
  top: 21px;
  left: 34px;
  width: 20px;
  height: 13px;
  border: 1px solid #2d4d68;
  border-radius: 3px;
  background: #fff;
  font: 700 8px/11px "DejaVu Sans", sans-serif;
  text-align: center;
}

.views { display: flex; gap: 3px; height: 28px; padding: 3px 6px; }
.view { display: flex; align-items: center; gap: 3px; height: 21px; padding: 0 6px 0 1px; border: 1px solid transparent; background: none; }
.view-on { border-color: #3399e6; }
.view:not(.view-on) { padding-left: 0; border-left: 0; }

/* Actions */
.actions { background: linear-gradient(to right, #fcfcfc, #e9e9e9); }
.links { padding: 5px 3px 0; color: #3e96d2; }
.links li { position: relative; height: 20px; padding-left: 26px; line-height: 20px; white-space: nowrap; }
.links .ruled { height: 25px; padding-top: 3px; border-top: 1px solid; border-image: linear-gradient(to right, transparent, #888 30%) 1; }
.links .ruled:nth-child(3) { margin-top: 1px; }
.helped .ico { position: absolute; left: 2px; top: 4px; }

.status { display: flex; align-items: center; justify-content: space-between; height: 23px; padding: 0 1px 0 5px; border-top: 1px solid #fff; background: linear-gradient(to right, #e4e1e2, #fbfbfb); }
.status-end { display: flex; align-items: flex-end; }
.sizer { width: 11px; height: 11px; }

/* Shortcut menu */
.context { position: absolute; left: 82px; top: 187px; width: 163px; padding: 0 1px 0 3px; border: 1px solid #979797; background: linear-gradient(to right, #fcfcfc 2px, #f1f1f1 2px 24px, #fcfcfc 24px); box-shadow: 3px 3px 3px #0007; }
.entry { position: relative; display: flex; align-items: center; gap: 15px; width: 100%; height: 28px; padding: 0 0 0 1px; border: 0; background: none; }
.entry:first-child { height: 26px; padding-bottom: 2px; }
.entry:last-child { height: 26px; }
.entry-ruled { border-top: 1px solid #c5c3b5; border-image: linear-gradient(to right, transparent 28px, #c5c3b5 28px) 1; }
.entry-marked::after { position: absolute; inset: 0 -3px -2px -9px; border: 2px solid #f00000; content: ""; }
```
